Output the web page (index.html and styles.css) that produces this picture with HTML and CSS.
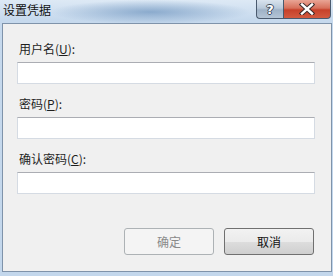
FILE: index.html
```html
<!DOCTYPE html>
<html lang="zh-CN">
<head>
  <meta charset="UTF-8">
  <title>设置凭据</title>
  <link rel="stylesheet" href="styles.css">
</head>
<body>
  <div class="window">
    <div class="titlebar">
      <span class="title">设置凭据</span>
      <div class="caption-buttons">
        <div class="cap cap-help">?</div>
        <div class="cap cap-close">
          <svg width="16" height="12" viewBox="0 0 16 12">
            <path d="M3 1.5 L13 10.5 M13 1.5 L3 10.5" stroke="#3b2a2a" stroke-width="4.4" stroke-linecap="square"/>
            <path d="M3 1.5 L13 10.5 M13 1.5 L3 10.5" stroke="#ffffff" stroke-width="2.4" stroke-linecap="square"/>
          </svg>
        </div>
      </div>
    </div>

    <div class="client">
      <div class="field">
        <label for="user">用户名(<u>U</u>):</label>
        <input type="text" id="user">
      </div>
      <div class="field">
        <label for="pw">密码(<u>P</u>):</label>
        <input type="password" id="pw">
      </div>
      <div class="field">
        <label for="pw2">确认密码(<u>C</u>):</label>
        <input type="password" id="pw2">
      </div>

      <div class="buttons">
        <button class="btn" disabled>确定</button>
        <button class="btn">取消</button>
      </div>
    </div>
  </div>
</body>
</html>
```

FILE: styles.css
```css
:root {
  --frame: #c8dbee;
  --client: #f0f0f0;
  --client-border: #7f93aa;
  --text: #1e1e1e;
}
* { box-sizing: border-box; }
body {
  margin: 0;
  font-family: "Noto Sans CJK SC", "Liberation Sans", sans-serif;
  font-size: 12px;
  color: var(--text);
}
.window {
  width: 333px;
  height: 276px;
  display: flex;
  flex-direction: column;
  background:
    radial-gradient(ellipse 100px 12px at 150px 12px, rgba(110,148,190,0.7), rgba(110,148,190,0) 100%),
    linear-gradient(180deg, #dde9f5 0%, #c6d9ed 20px, #c3d7ec 100%);
}
.titlebar {
  height: 23px;
  display: flex;
  align-items: flex-start;
}
.title {
  padding: 2px 0 0 3px;
  line-height: 16px;
  font-size: 12px;
  color: #111;
}
.caption-buttons {
  display: flex;
  margin-left: auto;
  margin-right: 2px;
}
.cap {
  height: 19px;
  border: 1px solid #4a5a6e;
  border-top: none;
  display: flex;
  align-items: center;
  justify-content: center;
}
.cap-help {
  width: 27px;
  border-right: none;
  border-radius: 0 0 0 4px;
  background: linear-gradient(180deg, #d9e3ee 0%, #b9c9da 45%, #9fb2c7 55%, #b4c5d6 100%);
  color: #fff;
  font-family: "DejaVu Sans", sans-serif;
  font-weight: bold;
  font-size: 13px;
  line-height: 1;
  text-shadow: 1px 0 #3c4a5c, -1px 0 #3c4a5c, 0 1px #3c4a5c, 0 -1px #3c4a5c;
}
.cap-close {
  width: 48px;
  border-radius: 0 0 4px 0;
  background: linear-gradient(180deg, #e9a595 0%, #d7705b 45%, #c7412a 55%, #d35a40 100%);
}
.client {
  flex: 1;
  margin: 0 1px 4px 2px;
  border: 1px solid var(--client-border);
  background: var(--client);
  padding: 17px 16px 16px 14px;
  display: flex;
  flex-direction: column;
}
.field {
  margin-bottom: 12px;
}
.field label {
  display: block;
  line-height: 16px;
  padding-left: 2px;
  margin-bottom: 5px;
}
.field input {
  display: block;
  width: 100%;
  height: 22px;
  border: 1px solid #d5dbe3;
  border-top-color: #abadb3;
  background: #fff;
  outline: none;
}
.buttons {
  margin-top: auto;
  display: flex;
  justify-content: flex-end;
  gap: 10px;
  padding-right: 1px;
}
.btn {
  width: 90px;
  height: 27px;
  border: 1px solid #707070;
  border-radius: 3px;
  font-family: inherit;
  font-size: 12px;
  color: #111;
  background: linear-gradient(180deg, #f2f2f2 0%, #ebebeb 50%, #dddddd 51%, #cfcfcf 100%);
}
.btn:disabled {
  border-color: #adb2b5;
  background: #f4f4f4;
  color: #8a8a8a;
}
```
